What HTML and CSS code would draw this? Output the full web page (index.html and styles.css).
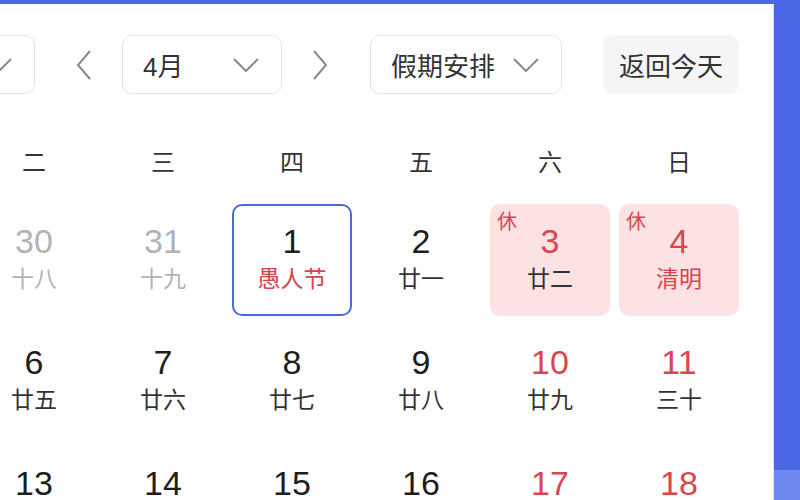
FILE: index.html
```html
<!DOCTYPE html>
<html lang="zh-CN">
<head>
<meta charset="utf-8">
<title>万年历</title>
<link rel="stylesheet" href="styles.css">
</head>
<body>
<div class="panel">
  <div class="inner">
    <div class="toolbar">
      <div class="left-group">
        <div class="select select-year">
          <svg class="chev" width="26" height="14" viewBox="0 0 26 14"><polyline points="1,1 13,13 25,1" fill="none" stroke="#8a8a8a" stroke-width="2"/></svg>
        </div>
        <div class="arrow arrow-prev">
          <svg width="16" height="30" viewBox="0 0 16 30"><polyline points="14,1 2,15 14,29" fill="none" stroke="#8a8a8a" stroke-width="2"/></svg>
        </div>
        <div class="select select-month"><span>4月</span>
          <svg class="chev" width="26" height="14" viewBox="0 0 26 14"><polyline points="1,1 13,13 25,1" fill="none" stroke="#8a8a8a" stroke-width="2"/></svg>
        </div>
        <div class="arrow arrow-next">
          <svg width="16" height="30" viewBox="0 0 16 30"><polyline points="2,1 14,15 2,29" fill="none" stroke="#8a8a8a" stroke-width="2"/></svg>
        </div>
        <div class="select select-holiday"><span>假期安排</span>
          <svg class="chev" width="26" height="14" viewBox="0 0 26 14"><polyline points="1,1 13,13 25,1" fill="none" stroke="#8a8a8a" stroke-width="2"/></svg>
        </div>
      </div>
      <div class="today-btn">返回今天</div>
    </div>

    <div class="weekdays">
      <div></div><div>二</div><div>三</div><div>四</div><div>五</div><div>六</div><div>日</div>
    </div>

    <div class="days">
      <div class="day other"></div>
      <div class="day other"><div class="num">30</div><div class="lunar">十八</div></div>
      <div class="day other"><div class="num">31</div><div class="lunar">十九</div></div>
      <div class="day today"><div class="num">1</div><div class="lunar fest">愚人节</div></div>
      <div class="day"><div class="num">2</div><div class="lunar">廿一</div></div>
      <div class="day rest weekend"><span class="tag">休</span><div class="num">3</div><div class="lunar">廿二</div></div>
      <div class="day rest weekend"><span class="tag">休</span><div class="num">4</div><div class="lunar fest">清明</div></div>

      <div class="day rest"></div>
      <div class="day"><div class="num">6</div><div class="lunar">廿五</div></div>
      <div class="day"><div class="num">7</div><div class="lunar">廿六</div></div>
      <div class="day"><div class="num">8</div><div class="lunar">廿七</div></div>
      <div class="day"><div class="num">9</div><div class="lunar">廿八</div></div>
      <div class="day weekend"><div class="num">10</div><div class="lunar">廿九</div></div>
      <div class="day weekend"><div class="num">11</div><div class="lunar">三十</div></div>

      <div class="day"></div>
      <div class="day"><div class="num">13</div></div>
      <div class="day"><div class="num">14</div></div>
      <div class="day"><div class="num">15</div></div>
      <div class="day"><div class="num">16</div></div>
      <div class="day weekend"><div class="num">17</div></div>
      <div class="day weekend"><div class="num">18</div></div>
    </div>
  </div>
</div>
</body>
</html>
```

FILE: styles.css
```css
html, body {
  margin: 0;
  padding: 0;
}

body {
  width: 800px;
  height: 500px;
  overflow: hidden;
  background: linear-gradient(to bottom, #4b67e6 0, #4b67e6 470px, #6f87f0 470px);
  font-family: "Liberation Sans", "Noto Sans CJK SC", sans-serif;
  color: #222;
}

.panel {
  margin-top: 4px;
  width: 774px;
  height: 496px;
  background: #fff;
  border-right: 1px solid #dde2ee;
  box-sizing: border-box;
  overflow: hidden;
}

.inner {
  margin-left: -155px;
  width: 894px;
}

/* toolbar */
.toolbar {
  margin-top: 31px;
  height: 59px;
  display: flex;
  justify-content: space-between;
  align-items: center;
}

.left-group {
  display: flex;
  align-items: center;
  height: 100%;
}

.select {
  box-sizing: border-box;
  height: 59px;
  border: 1px solid #e2e2e2;
  border-radius: 10px;
  display: flex;
  align-items: center;
  justify-content: space-between;
  padding: 0 22px 0 20px;
  font-size: 26px;
  color: #333;
}

.select-year { width: 190px; justify-content: flex-end; }
.select-month { width: 160px; }
.select-holiday { width: 192px; padding-left: 20px; padding-right: 22px; }

.arrow {
  width: 40px;
  height: 59px;
  display: flex;
  align-items: center;
  justify-content: center;
}

.arrow-prev { margin-left: 29px; margin-right: 18px; }
.arrow-next { margin-left: 18px; margin-right: 30px; }

.today-btn {
  box-sizing: border-box;
  width: 136px;
  height: 59px;
  background: #f5f5f6;
  border-radius: 10px;
  display: flex;
  align-items: center;
  justify-content: center;
  font-size: 26px;
  color: #333;
}

/* week header */
.weekdays {
  margin-top: 46px;
  height: 40px;
  display: grid;
  grid-template-columns: repeat(7, 120px);
  column-gap: 9px;
  align-items: center;
  text-align: center;
  font-size: 24px;
  color: #333;
}

/* day grid */
.days {
  margin-top: 24px;
  display: grid;
  grid-template-columns: repeat(7, 120px);
  grid-auto-rows: 112px;
  gap: 9px;
}

.day {
  position: relative;
  box-sizing: border-box;
  border-radius: 10px;
  display: flex;
  flex-direction: column;
  align-items: center;
  padding-top: 18px;
}

.num {
  font-size: 34px;
  line-height: 38px;
  color: #1e1e1e;
}

.lunar {
  margin-top: 6px;
  font-size: 23px;
  line-height: 26px;
  color: #333;
}

.day.other .num,
.day.other .lunar {
  color: #b3b3b3;
}

.day.today {
  border: 2px solid #4a6bd6;
  padding-top: 16px;
}

.day.weekend .num {
  color: #d9464e;
}

.lunar.fest {
  color: #d6434a;
}

.day.rest {
  background: #fde2e4;
}

.tag {
  position: absolute;
  top: 6px;
  left: 7px;
  font-size: 20px;
  line-height: 24px;
  color: #d9464e;
}
```
